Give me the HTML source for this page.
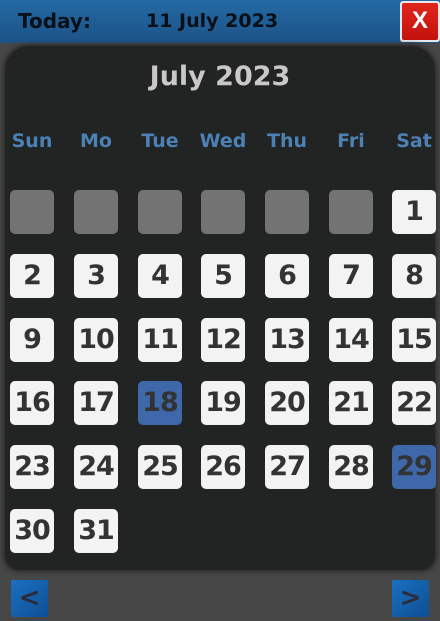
<!DOCTYPE html>
<html><head><style>
*{margin:0;padding:0;box-sizing:border-box}
body{width:440px;height:621px;background:#474747;position:relative;overflow:hidden;font-family:"DejaVu Sans",sans-serif;font-weight:bold}
.hdr{position:absolute;left:0;top:0;width:440px;height:43px;background:linear-gradient(#2369a3,#1d5387);}
.hdr .t{position:absolute;top:9px;font-size:20px;color:#0a0f18}
.x{position:absolute;left:400px;top:1px;width:40px;height:41px;background:#e8e8e8;border-radius:3px}
.x div{position:absolute;left:2px;top:2px;right:2px;bottom:2px;background:linear-gradient(#e0261c,#c4120e);border-radius:2px;color:#fff;font-size:24px;text-align:center;line-height:36px;font-family:"Liberation Sans",sans-serif}
.panel{position:absolute;left:5px;top:46px;width:430px;height:524px;background:#222323;border-radius:24px 24px 14px 14px;box-shadow:0 0 4px 2px #2c2c2c}
.title{position:absolute;top:61px;left:0;width:440px;text-align:center;font-size:27px;color:#c8c8c8}
.dh{position:absolute;top:130px;margin-left:-10px;width:64px;text-align:center;font-size:19px;color:#4c81b6}
.c{position:absolute;width:44px;height:44px;border-radius:5px;background:#f3f3f3;color:#333;font-size:27px;text-align:center;line-height:44px;letter-spacing:-1px}
.c.e{background:#737373}
.c.s{background:#3e68aa}
.btn{position:absolute;top:580px;width:37px;height:37px;background:linear-gradient(135deg,#1a70c0,#0e4f95);border-radius:2px;color:#2b2b3a;font-size:26px;text-align:center;line-height:36px}
</style></head><body>
<div class="hdr"><span class="t" style="left:18px">Today:</span><span class="t" style="left:146px;font-size:19px;top:10px">11 July 2023</span></div>
<div class="x"><div>X</div></div>
<div class="panel"></div>
<div class="title">July 2023</div>
<div class="dh" style="left:10px">Sun</div><div class="dh" style="left:74px">Mo</div><div class="dh" style="left:138px">Tue</div><div class="dh" style="left:201px">Wed</div><div class="dh" style="left:265px">Thu</div><div class="dh" style="left:329px">Fri</div><div class="dh" style="left:392px">Sat</div>
<div class="c e" style="left:10px;top:190px"></div><div class="c e" style="left:74px;top:190px"></div><div class="c e" style="left:138px;top:190px"></div><div class="c e" style="left:201px;top:190px"></div><div class="c e" style="left:265px;top:190px"></div><div class="c e" style="left:329px;top:190px"></div><div class="c" style="left:392px;top:190px">1</div>
<div class="c" style="left:10px;top:254px">2</div><div class="c" style="left:74px;top:254px">3</div><div class="c" style="left:138px;top:254px">4</div><div class="c" style="left:201px;top:254px">5</div><div class="c" style="left:265px;top:254px">6</div><div class="c" style="left:329px;top:254px">7</div><div class="c" style="left:392px;top:254px">8</div>
<div class="c" style="left:10px;top:318px">9</div><div class="c" style="left:74px;top:318px">10</div><div class="c" style="left:138px;top:318px">11</div><div class="c" style="left:201px;top:318px">12</div><div class="c" style="left:265px;top:318px">13</div><div class="c" style="left:329px;top:318px">14</div><div class="c" style="left:392px;top:318px">15</div>
<div class="c" style="left:10px;top:381px">16</div><div class="c" style="left:74px;top:381px">17</div><div class="c s" style="left:138px;top:381px">18</div><div class="c" style="left:201px;top:381px">19</div><div class="c" style="left:265px;top:381px">20</div><div class="c" style="left:329px;top:381px">21</div><div class="c" style="left:392px;top:381px">22</div>
<div class="c" style="left:10px;top:445px">23</div><div class="c" style="left:74px;top:445px">24</div><div class="c" style="left:138px;top:445px">25</div><div class="c" style="left:201px;top:445px">26</div><div class="c" style="left:265px;top:445px">27</div><div class="c" style="left:329px;top:445px">28</div><div class="c s" style="left:392px;top:445px">29</div>
<div class="c" style="left:10px;top:509px">30</div><div class="c" style="left:74px;top:509px">31</div>
<div class="btn" style="left:11px">&lt;</div>
<div class="btn" style="left:392px">&gt;</div>
</body></html>
